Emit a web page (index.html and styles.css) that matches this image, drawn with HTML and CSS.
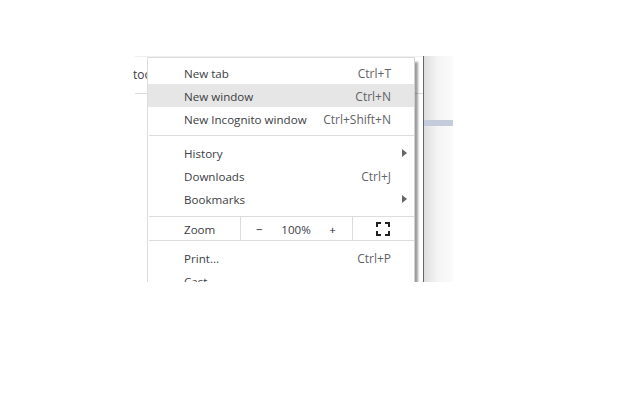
FILE: index.html
```html
<!DOCTYPE html>
<html lang="en">
<head>
    <meta charset="UTF-8">
    <title>Chrome menu</title>
    <link rel="stylesheet" href="styles.css">
</head>
<body>

<div class="shot">
    <div class="backdrop">
        <div class="tab-strip">
            <span class="tab-text">tools</span>
        </div>
        <div class="side-panel">
            <div class="side-bar"></div>
        </div>

        <div class="menu">
            <div class="item"><span>New tab</span><span class="key">Ctrl+T</span></div>
            <div class="item active"><span>New window</span><span class="key">Ctrl+N</span></div>
            <div class="item"><span>New Incognito window</span><span class="key">Ctrl+Shift+N</span></div>
            <div class="sep"></div>
            <div class="item"><span>History</span><span class="arrow"></span></div>
            <div class="item"><span>Downloads</span><span class="key">Ctrl+J</span></div>
            <div class="item"><span>Bookmarks</span><span class="arrow"></span></div>
            <div class="zoom-row">
                <span class="zoom-label">Zoom</span>
                <div class="zoom-controls">
                    <span class="zoom-btn">&minus;</span>
                    <span>100%</span>
                    <span class="zoom-btn">+</span>
                </div>
                <div class="zoom-full">
                    <svg width="14" height="14" viewBox="0 0 14 14">
                        <path d="M1 5V1H5M9 1H13V5M13 9V13H9M5 13H1V9" fill="none" stroke="#202124" stroke-width="2"/>
                    </svg>
                </div>
            </div>
            <div class="item"><span>Print...</span><span class="key">Ctrl+P</span></div>
            <div class="item"><span>Cast...</span></div>
        </div>
    </div>
</div>

</body>
</html>
```

FILE: styles.css
```css
body {
    margin: 0;
    background-color: #fff;
    font-family: "Open Sans", "Noto Sans", sans-serif;
    overflow: hidden;
}
.shot {
    width: 640px;
    height: 400px;
    padding: 56px 0 0 133px;
    box-sizing: border-box;
    overflow: hidden;
}
.backdrop {
    position: relative;
    width: 320px;
    height: 226px;
    display: flex;
    overflow: hidden;
}
.tab-strip {
    width: 288px;
    height: 38px;
    margin-left: 2px;
    box-sizing: border-box;
    border-top: 1px solid #f0f0f0;
    border-bottom: 1px solid #dadce0;
    font-size: 12px;
    line-height: 36px;
    color: #3c4043;
}
.tab-text {
    margin-left: -2px;
}
.side-panel {
    width: 30px;
    background: linear-gradient(to right, #dedede, #f4f4f4 45%, #fbfbfb);
    border-left: 1px solid #666;
    box-sizing: border-box;
    padding-top: 64px;
}
.side-bar {
    height: 6px;
    background-color: #c4cbdb;
}
.menu {
    position: absolute;
    left: 14px;
    top: 1px;
    width: 268px;
    height: 240px;
    box-sizing: border-box;
    padding-top: 3px;
    background-color: #fff;
    border-top: 1px solid #dcdcdc;
    border-left: 1px solid #dcdcdc;
    border-right: 1px solid #d0d0d0;
    box-shadow: 3px 5px 2px rgba(0, 0, 0, 0.38);
    font-size: 11.6px;
    color: #3c4043;
}
.item {
    display: flex;
    justify-content: space-between;
    align-items: center;
    height: 23px;
    padding: 1px 23px 0 36px;
    box-sizing: border-box;
}
.active {
    background-color: #e6e6e6;
}
.key {
    font-size: 12px;
    color: #5f6368;
}
.arrow {
    width: 0;
    height: 0;
    margin-right: -16px;
    border-left: 5px solid #666;
    border-top: 4px solid transparent;
    border-bottom: 4px solid transparent;
}
.sep {
    height: 1px;
    margin: 5px 0 5px 1px;
    background-color: #dcdcdc;
}
.zoom-row {
    display: flex;
    align-items: center;
    height: 25px;
    margin: 6px 0 5px 1px;
    box-sizing: border-box;
    border-top: 1px solid #dcdcdc;
    border-bottom: 1px solid #dcdcdc;
}
.zoom-label {
    width: 91px;
    padding: 1px 0 0 35px;
    box-sizing: border-box;
}
.zoom-controls {
    display: flex;
    justify-content: space-between;
    align-items: center;
    width: 113px;
    height: 100%;
    padding: 1px 16px 0 15px;
    box-sizing: border-box;
    border-left: 1px solid #dcdcdc;
    border-right: 1px solid #dcdcdc;
}
.zoom-btn {
    color: #202124;
}
.zoom-full {
    display: flex;
    justify-content: center;
    width: 60px;
}
```
